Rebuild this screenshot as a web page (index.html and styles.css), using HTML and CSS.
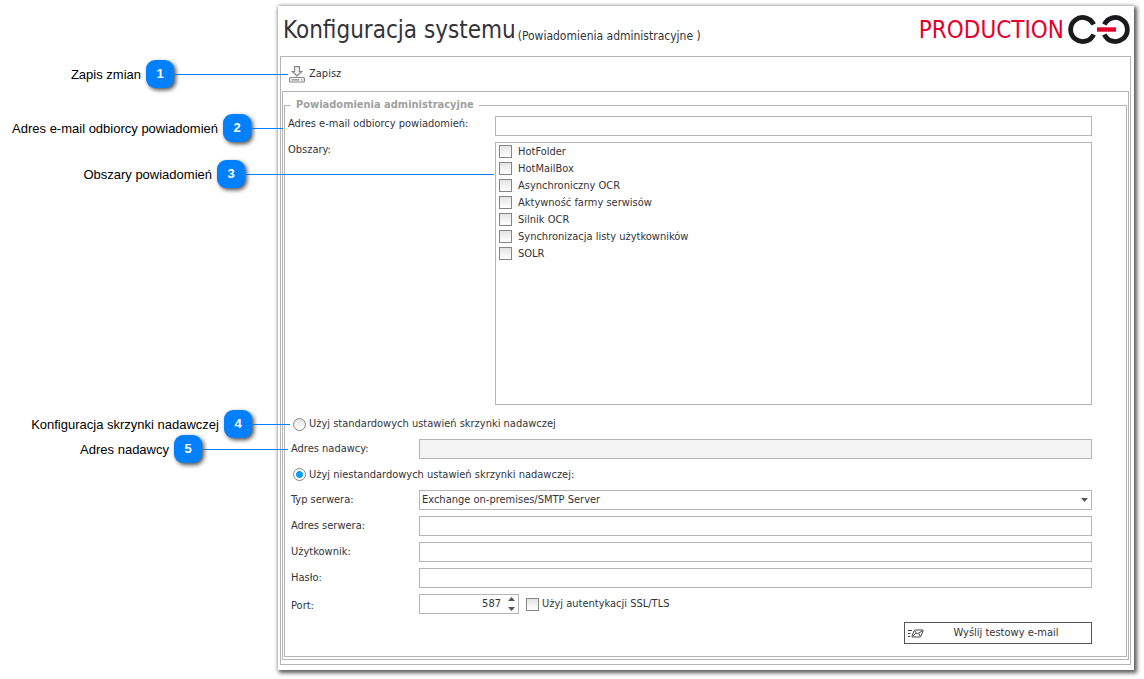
FILE: index.html
```html
<!DOCTYPE html>
<html lang="pl">
<head>
<meta charset="utf-8">
<title>Konfiguracja systemu</title>
<link rel="stylesheet" href="styles.css">
</head>
<body>
<div class="page">
  <main class="window">
    <header class="header">
      <h1 class="title">Konfiguracja systemu <small class="subtitle">(Powiadomienia administracyjne )</small></h1>
      <div class="brand">
        <span class="brand-name">PRODUCTION</span>
        <svg class="brand-mark" width="62" height="29" viewBox="0 0 62 29" aria-hidden="true">
          <g fill="none" stroke="#1a1a1c" stroke-width="4.8">
            <path d="M25.600 9.600A12 12 0 1 0 25.600 19.400"/>
            <path d="M36.400 9.600A12 12 0 1 1 36.400 19.400"/>
          </g>
          <path d="M29 14.500H48" stroke="#e4002b" stroke-width="4.4"/>
        </svg>
      </div>
    </header>
    <section class="frame">
      <div class="toolbar">
        <button type="button" class="save">
          <svg width="16" height="17" viewBox="0 0 16 17" fill="none" stroke="#858585" stroke-width="1.200" aria-hidden="true">
            <path d="M5.500 .6H10.500V5.500H12.700L8 10L3.300 5.500H5.500Z" fill="#f1f1f1"/>
            <rect x=".6" y="11.500" width="14.800" height="4.500" rx="1"/>
            <path d="M2.500 13.800H10.500M12 13.800H13.500"/>
          </svg>
          Zapisz
        </button>
      </div>
      <div class="inner-frame">
        <fieldset class="group">
          <legend class="legend">Powiadomienia administracyjne</legend>
          <form class="form">
            <div class="row row-wide">
              <label class="label" for="recipient">Adres e-mail odbiorcy powiadomień:</label>
              <input class="field" id="recipient" type="text">
            </div>
            <div class="row row-wide">
              <span class="label" id="areas">Obszary:</span>
              <div class="list" role="group" aria-labelledby="areas">
                <label class="item"><input class="check" type="checkbox">HotFolder</label>
                <label class="item"><input class="check" type="checkbox">HotMailBox</label>
                <label class="item"><input class="check" type="checkbox">Asynchroniczny OCR</label>
                <label class="item"><input class="check" type="checkbox">Aktywność farmy serwisów</label>
                <label class="item"><input class="check" type="checkbox">Silnik OCR</label>
                <label class="item"><input class="check" type="checkbox">Synchronizacja listy użytkowników</label>
                <label class="item"><input class="check" type="checkbox">SOLR</label>
              </div>
            </div>
            <label class="choice choice-first"><input class="radio" type="radio" name="mailbox">Użyj standardowych ustawień skrzynki nadawczej</label>
            <div class="row">
              <label class="label" for="sender">Adres nadawcy:</label>
              <input class="field" id="sender" type="text" disabled>
            </div>
            <label class="choice"><input class="radio" type="radio" name="mailbox" checked>Użyj niestandardowych ustawień skrzynki nadawczej:</label>
            <div class="row">
              <label class="label" for="type">Typ serwera:</label>
              <div class="select-wrap">
                <select class="field" id="type"><option>Exchange on-premises/SMTP Server</option></select>
                <svg class="select-arrow" width="7" height="4" viewBox="0 0 7 4" aria-hidden="true"><path d="M0 0H7L3.500 4Z"/></svg>
              </div>
            </div>
            <div class="row">
              <label class="label" for="server">Adres serwera:</label>
              <input class="field" id="server" type="text">
            </div>
            <div class="row">
              <label class="label" for="user">Użytkownik:</label>
              <input class="field" id="user" type="text">
            </div>
            <div class="row">
              <label class="label" for="password">Hasło:</label>
              <input class="field" id="password" type="password">
            </div>
            <div class="row">
              <label class="label label-port" for="port">Port:</label>
              <div class="port">
                <div class="spin">
                  <input class="spin-input" id="port" type="text" inputmode="numeric" value="587">
                  <svg width="7" height="14" viewBox="0 0 7 14" aria-hidden="true"><path d="M0 4H7L3.500 0ZM0 10H7L3.500 14Z"/></svg>
                </div>
                <label class="ssl"><input class="check" type="checkbox">Użyj autentykacji SSL/TLS</label>
              </div>
            </div>
            <button type="button" class="send">
              <svg width="16" height="9" viewBox="0 0 16 9" fill="none" stroke="#444" aria-hidden="true">
                <path d="M0 1.500H4M0 4.500H2.500M0 7.500H2"/>
                <path d="M7.500 1H14.500Q15.500 1 15 2L13 7Q12.600 8 11.500 8H4.500Q3.500 8 4 7L6 2Q6.400 1 7.500 1ZM6.800 2L9.300 5L14.500 1.800M4.500 7.500L8 4.200M12.300 7.500L10.800 4.500"/>
              </svg>
              <span class="send-text">Wyślij testowy e-mail</span>
            </button>
          </form>
        </fieldset>
      </div>
    </section>
  </main>
  <aside class="callouts">
    <div class="callout callout-1"><span class="note">Zapis zmian</span><b class="badge">1</b><i class="line"></i></div>
    <div class="callout callout-2"><span class="note">Adres e-mail odbiorcy powiadomień</span><b class="badge">2</b><i class="line"></i></div>
    <div class="callout callout-3"><span class="note">Obszary powiadomień</span><b class="badge">3</b><i class="line"></i></div>
    <div class="callout callout-4"><span class="note">Konfiguracja skrzynki nadawczej</span><b class="badge">4</b><i class="line"></i></div>
    <div class="callout callout-5"><span class="note">Adres nadawcy</span><b class="badge">5</b><i class="line"></i></div>
  </aside>
</div>
</body>
</html>
```
FILE: styles.css
```css
* { box-sizing: border-box; }

body {
  margin: 0;
  background: #fff;
  color: #333338;
  font: 11px/16px "DejaVu Sans Condensed", "Noto Sans", sans-serif;
}

input, select, button { font: inherit; color: inherit; margin: 0; }

.page { position: relative; padding: 6px 10px 10px 278px; }

.window {
  padding: 0 3px 5px 2px;
  background: #fff;
  box-shadow: 2px 2px 4px 1px #606060, 0 0 4px rgba(0, 0, 0, .3);
}

.header {
  display: flex;
  justify-content: space-between;
  height: 50px;
  padding: 8px 1px 0 3px;
}

.title {
  display: flex;
  gap: 2px;
  margin: 0;
  font-size: 24px;
  line-height: 32px;
  font-weight: 400;
  white-space: nowrap;
}
.subtitle { padding-top: 14px; font-size: 12px; line-height: 16px; }

.brand { display: flex; align-items: flex-start; gap: 4px; }
.brand-name { color: #e4002b; font-size: 24px; line-height: 32px; }
.brand-mark { margin-top: 1px; }

.frame { padding: 0 1px 4px; border: 1px solid #b4b4b4; }

.toolbar { display: flex; height: 34px; padding: 0 7px; }

.save {
  display: flex;
  align-items: center;
  gap: 4px;
  padding: 0;
  border: 0;
  background: none;
}

.inner-frame { padding: 6px 1px 2px; border: 1px solid #b4b4b4; }

.group { min-width: 0; margin: 0; padding: 4px 34px 12px 3px; border: 1px solid #b4b4b4; }

.legend {
  margin-left: 3px;
  padding: 0 5px;
  color: #a0a0a0;
  font-weight: 700;
  line-height: 14px;
}

.form { display: flex; flex-direction: column; gap: 6px; }

.row {
  display: grid;
  grid-template-columns: 128px 1fr;
  align-items: center;
  padding-left: 3px;
}

.row-wide { grid-template-columns: 207px 1fr; align-items: start; padding-left: 0; }
.label-port { padding-top: 4px; }

.field {
  width: 100%;
  height: 20px;
  padding: 0 3px;
  border: 1px solid #b4b4b4;
  border-radius: 0;
  background: #fff;
}

.field:disabled { background: #f4f4f4; }

.select-wrap { position: relative; height: 20px; }
.select-wrap .field { appearance: none; padding: 0 2px; }
.select-arrow { position: absolute; right: 4px; top: 8px; fill: #555; }

.list { height: 263px; padding-left: 3px; border: 1px solid #b4b4b4; }
.item { display: flex; align-items: center; gap: 6px; height: 17px; }

.check, .radio {
  appearance: none;
  flex: none;
  width: 13px;
  height: 13px;
  border: 1px solid #858585;
  background: linear-gradient(#e4e4e4, #fff);
}

.radio { border-radius: 50%; }

.radio:checked { background: radial-gradient(circle, #0a9ff5 0 3px, #fff 4px); }

.choice { display: flex; align-items: center; gap: 3px; height: 19px; padding-left: 5px; }
.choice-first { height: 22px; padding-top: 4px; }

.port { display: flex; align-items: center; gap: 7px; }

.spin {
  display: flex;
  align-items: center;
  width: 100px;
  height: 20px;
  padding-right: 3px;
  border: 1px solid #b4b4b4;
  fill: #555;
}

.spin-input { flex: 1; min-width: 0; padding: 0 7px; border: 0; text-align: right; background: none; }

.ssl { display: flex; align-items: center; gap: 3px; }

.send {
  display: flex;
  align-items: center;
  align-self: flex-end;
  width: 188px;
  height: 22px;
  margin-top: 2px;
  padding: 0 3px;
  border: 1px solid #555;
  background: #fff;
}

.send-text { flex: 1; text-align: center; }

/* Numbered annotations laid over the window */
.callout {
  position: absolute;
  left: 0;
  display: flex;
  align-items: center;
  color: #000;
  font: 13px/16px "Liberation Sans", Arial, sans-serif;
}

.note { flex: none; margin-right: 5px; padding-top: 2px; text-align: right; white-space: nowrap; }

.badge {
  flex: none;
  width: 28px;
  height: 28px;
  border-radius: 9px;
  background: #0080ff;
  box-shadow: 2px 2px 4px rgba(0, 0, 0, .7);
  color: #fff;
  line-height: 28px;
  text-align: center;
}

.line { flex: 1; height: 1px; background: #0080ff; }

.callout-1 { top: 60px; width: 288px; }
.callout-1 .note { width: 141px; }
.callout-2 { top: 114px; width: 283px; }
.callout-2 .note { width: 218px; }
.callout-3 { top: 160px; width: 494px; }
.callout-3 .note { width: 212px; }
.callout-4 { top: 410px; width: 290px; }
.callout-4 .note { width: 219px; }
.callout-5 { top: 435px; width: 288px; }
.callout-5 .note { width: 169px; }
```
